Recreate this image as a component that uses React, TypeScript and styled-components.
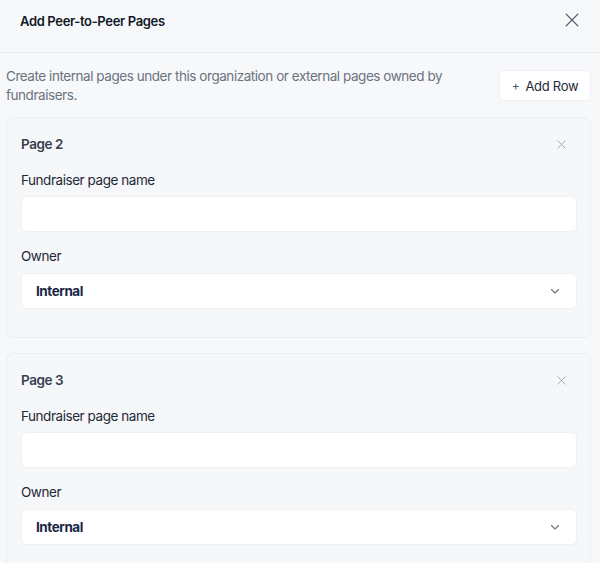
import React from 'react';
import styled, { createGlobalStyle } from 'styled-components';

const GlobalStyle = createGlobalStyle`
  html, body {
    margin: 0;
    padding: 0;
    background: #f7f8fa;
    font-family: Inter, "Noto Sans", sans-serif;
    color: #1f2937;
    letter-spacing: -0.45px;
  }
  * { box-sizing: border-box; }
`;

type PageRow = { id: number; title: string; owner: string };

const rows: PageRow[] = [
  { id: 2, title: 'Page 2', owner: 'Internal' },
  { id: 3, title: 'Page 3', owner: 'Internal' },
];

const CrossIcon = ({ size, color, width = 1.3 }: { size: number; color: string; width?: number }) => (
  <svg width={size} height={size} viewBox="0 0 12 12" fill="none">
    <path d="M1 1L11 11M11 1L1 11" stroke={color} strokeWidth={width} strokeLinecap="round" />
  </svg>
);

const ChevronIcon = () => (
  <svg width="10" height="10" viewBox="0 0 10 10" fill="none">
    <path d="M1.5 3.5L5 7L8.5 3.5" stroke="#6b7280" strokeWidth="1.1" strokeLinecap="round" strokeLinejoin="round" />
  </svg>
);

export default function App() {
  return (
    <>
      <GlobalStyle />
      <Modal>
        <Header>
          <Title>Add Peer-to-Peer Pages</Title>
          <IconButton aria-label="Close">
            <CrossIcon size={14} color="#4b5563" width={1.1} />
          </IconButton>
        </Header>
        <Body>
          <IntroRow>
            <Description>
              Create internal pages under this organization or external pages owned by fundraisers.
            </Description>
            <AddButton>
              <span>+</span> Add Row
            </AddButton>
          </IntroRow>
          {rows.map((row) => (
            <Card key={row.id}>
              <CardHeader>
                <CardTitle>{row.title}</CardTitle>
                <IconButton aria-label="Remove">
                  <CrossIcon size={9} color="#94a3b8" width={1.2} />
                </IconButton>
              </CardHeader>
              <Field>
                <Label>Fundraiser page name</Label>
                <Input />
              </Field>
              <Field $gap={8}>
                <Label>Owner</Label>
                <Select>
                  <SelectValue>{row.owner}</SelectValue>
                  <ChevronIcon />
                </Select>
              </Field>
            </Card>
          ))}
        </Body>
      </Modal>
    </>
  );
}

const Modal = styled.div`
  width: 600px;
  min-height: 563px;
  background: #f7f8fa;
`;

const Header = styled.header`
  height: 53px;
  display: flex;
  align-items: flex-start;
  justify-content: space-between;
  padding: 13px 21px 0 20px;
  border-bottom: 1px solid #ebedf0;
`;

const Title = styled.h2`
  margin: 0;
  font-size: 13px;
  line-height: 16px;
  font-weight: 600;
  letter-spacing: -0.35px;
  color: #111827;
`;

const IconButton = styled.button`
  display: flex;
  align-items: center;
  justify-content: center;
  padding: 0;
  border: 0;
  background: none;
`;

const Body = styled.div`
  display: flex;
  flex-direction: column;
  gap: 15px;
  padding: 14px 9px 0 6px;
`;

const IntroRow = styled.div`
  display: flex;
  align-items: flex-start;
  justify-content: space-between;
  margin-bottom: -3px;
`;

const Description = styled.p`
  margin: 0;
  max-width: 450px;
  font-size: 13.5px;
  line-height: 19px;
  color: #6b7280;
`;

const AddButton = styled.button`
  height: 31px;
  width: 92px;
  margin-top: 3px;
  display: flex;
  align-items: center;
  justify-content: center;
  gap: 6px;
  border: 1px solid #eef0f3;
  border-radius: 4px;
  background: #fff;
  font-family: inherit;
  font-size: 13px;
  letter-spacing: -0.3px;
  color: #1f2937;

  span {
    font-size: 12px;
    color: #4b5563;
  }
`;

const Card = styled.section`
  display: flex;
  flex-direction: column;
  gap: 15px;
  padding: 14px 13px 28px 14px;
  border: 1px solid #eceef2;
  border-radius: 8px;
  background: #f6f7f9;
`;

const CardHeader = styled.div`
  height: 24px;
  display: flex;
  align-items: center;
  justify-content: space-between;
  padding-right: 11px;
`;

const CardTitle = styled.h3`
  margin: 0;
  font-size: 13.5px;
  font-weight: 600;
  color: #374151;
`;

const Field = styled.div<{ $gap?: number }>`
  display: flex;
  flex-direction: column;
  gap: ${(p) => p.$gap ?? 7}px;
`;

const Label = styled.label`
  font-size: 13.5px;
  line-height: 18px;
  color: #1f2937;
`;

const Input = styled.input`
  height: 36px;
  border: 1px solid #eef0f3;
  border-radius: 5px;
  background: #fff;
  outline: none;
`;

const Select = styled.div`
  height: 36px;
  display: flex;
  align-items: center;
  justify-content: space-between;
  padding: 0 16px 0 14px;
  border: 1px solid #eef0f3;
  border-radius: 5px;
  background: #fff;
`;

const SelectValue = styled.span`
  font-size: 13.5px;
  font-weight: 700;
  color: #1b2545;
`;
